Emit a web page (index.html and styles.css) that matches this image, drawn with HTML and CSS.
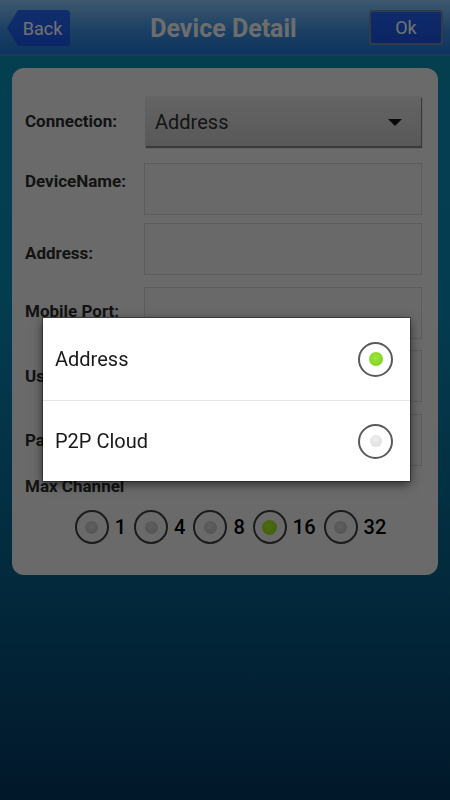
FILE: index.html
```html
<!DOCTYPE html>
<html>

<head>
    <title>Device Detail</title>
    <link rel="stylesheet" href="styles.css">
</head>

<body>
    <div class="topbar">
        <button class="back">Back</button>
        <div class="title">Device Detail</div>
        <button class="ok">Ok</button>
    </div>

    <div class="panel">
        <div class="row row-conn">
            <div class="label">Connection:</div>
            <div class="spinner">
                <span>Address</span>
                <span class="arrow"></span>
            </div>
        </div>
        <div class="row row-name">
            <div class="label">DeviceName:</div>
            <div class="field"></div>
        </div>
        <div class="row row-addr">
            <div class="label">Address:</div>
            <div class="field"></div>
        </div>
        <div class="row row-port">
            <div class="label">Mobile Port:</div>
            <div class="field"></div>
        </div>
        <div class="row row-user">
            <div class="label">User:</div>
            <div class="field"></div>
        </div>
        <div class="row row-pass">
            <div class="label">Password:</div>
            <div class="field"></div>
        </div>
        <div class="label channel-label">Max Channel</div>
        <div class="channels">
            <div class="opt"><span class="radio"></span><span>1</span></div>
            <div class="opt"><span class="radio"></span><span>4</span></div>
            <div class="opt"><span class="radio"></span><span>8</span></div>
            <div class="opt"><span class="radio on"></span><span>16</span></div>
            <div class="opt"><span class="radio"></span><span>32</span></div>
        </div>
    </div>

    <div class="dim"></div>

    <div class="dialog">
        <div class="item">
            <span>Address</span>
            <span class="pick on"></span>
        </div>
        <div class="item">
            <span>P2P Cloud</span>
            <span class="pick"></span>
        </div>
    </div>
</body>

</html>
```

FILE: styles.css
```css
body {
    margin: 0;
    width: 450px;
    height: 800px;
    overflow: hidden;
    font-family: Roboto, "Noto Sans", sans-serif;
    background: linear-gradient(#0b8eb2 0, #0b86b0 300px, #075d86 580px, #04355e 800px);
}

.topbar {
    height: 54px;
    display: flex;
    align-items: center;
    justify-content: space-between;
    padding: 0 7px;
    background: linear-gradient(#8ac4f5, #3f8fdc 55%, #1f72d2);
    border-bottom: 2px solid #3b84c8;
}

.back,
.ok {
    font-family: Roboto, sans-serif;
    font-size: 18px;
    color: #f8fcff;
    border: none;
    padding: 0;
    margin-top: 2px;
}

.back {
    width: 63px;
    height: 36px;
    padding-left: 8px;
    background: linear-gradient(#2466f0, #1a55e6);
    border-radius: 0 4px 4px 0;
    clip-path: polygon(11px 0, 100% 0, 100% 100%, 11px 100%, 0 50%);
}

.ok {
    width: 74px;
    height: 35px;
    border-radius: 4px;
    border: 2px solid #6f84a4;
    background: linear-gradient(#2160ec, #1a50de);
    margin-top: 1px;
}

.title {
    font-size: 25px;
    font-weight: bold;
    color: #f2f2f2;
    margin-left: 8px;
    margin-top: 2px;
}

.panel {
    margin: 12px 12px 0;
    height: 479px;
    padding: 28px 16px 0 13px;
    background: #ececec;
    border-radius: 12px;
}

.row {
    display: flex;
    align-items: center;
    justify-content: space-between;
}

.label {
    font-size: 17px;
    font-weight: bold;
    color: #2a2a2a;
}

.spinner {
    width: 276px;
    height: 50px;
    margin-right: 1px;
    box-sizing: border-box;
    display: flex;
    align-items: center;
    justify-content: space-between;
    padding: 2px 19px 0 10px;
    font-size: 20px;
    color: #2e2e2e;
    background: linear-gradient(#dedede, #c4c4c4);
    box-shadow: 1px 2px 1px rgba(0, 0, 0, 0.45);
}

.arrow {
    width: 0;
    height: 0;
    border-left: 7px solid transparent;
    border-right: 7px solid transparent;
    border-top: 7px solid #141414;
}

.field {
    width: 278px;
    height: 52px;
    box-sizing: border-box;
    background: #e8e8e8;
    border: 1px solid #cdcdcd;
}

.row-name {
    margin-top: 17px;
    align-items: flex-start;
}

.row-name .label {
    padding-top: 8px;
}

.row-addr {
    margin-top: 8px;
}

.row-addr .label {
    padding-top: 8px;
}

.row-port {
    margin-top: 12px;
}

.row-port .label {
    padding-bottom: 4px;
}

.row-user {
    margin-top: 11px;
}

.row-pass {
    margin-top: 12px;
}

.channel-label {
    margin-top: 10px;
}

.channels {
    display: flex;
    justify-content: center;
    gap: 8px;
    margin-top: 14px;
    padding-left: 14px;
    font-size: 20px;
    font-weight: 500;
    color: #000;
}

.opt {
    display: flex;
    align-items: center;
    gap: 6px;
}

.radio {
    width: 34px;
    height: 34px;
    box-sizing: border-box;
    border: 2px solid #3c3c3c;
    border-radius: 50%;
    display: flex;
    align-items: center;
    justify-content: center;
}

.radio::after {
    content: "";
    width: 13px;
    height: 13px;
    border-radius: 50%;
    background: radial-gradient(circle at 45% 40%, #d2d2d2, #b4b4b4);
}

.radio.on::after {
    width: 15px;
    height: 15px;
    background: radial-gradient(circle at 45% 40%, #a8ec30, #86d41a);
}

.dim {
    position: fixed;
    inset: 0;
    background: rgba(0, 0, 0, 0.55);
}

.dialog {
    position: absolute;
    left: 43px;
    top: 318px;
    width: 367px;
    background: #fff;
    box-shadow: 0 0 0 1px rgba(0, 0, 0, 0.35), 0 3px 10px rgba(0, 0, 0, 0.6);
}

.item {
    height: 82px;
    display: flex;
    align-items: center;
    justify-content: space-between;
    padding: 0 17px 0 12px;
    font-size: 20px;
    color: #1a1a1a;
}

.item + .item {
    height: 80px;
    border-top: 1px solid #e6e6e6;
}

.pick {
    width: 35px;
    height: 35px;
    box-sizing: border-box;
    border: 2px solid #5a5a5a;
    border-radius: 50%;
    display: flex;
    align-items: center;
    justify-content: center;
}

.pick::after {
    content: "";
    width: 12px;
    height: 12px;
    border-radius: 50%;
    background: radial-gradient(circle at 45% 40%, #f0f0f0, #d8d8d8);
}

.pick.on::after {
    width: 14px;
    height: 14px;
    background: radial-gradient(circle at 45% 40%, #9ee83a, #78cc18);
}
```
